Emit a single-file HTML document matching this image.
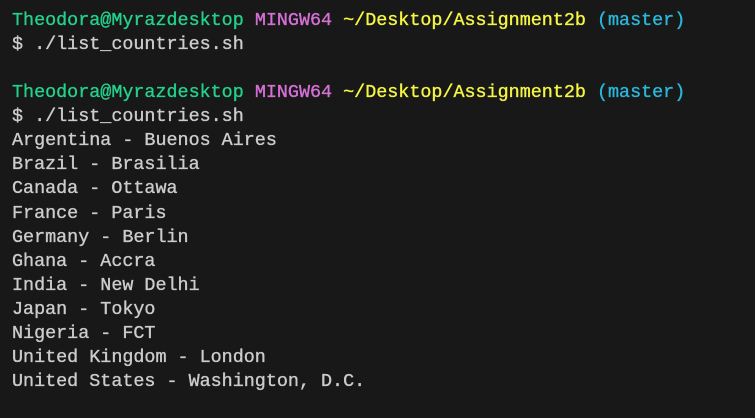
<!DOCTYPE html>
<html><head><style>
html,body{margin:0;padding:0;background:#181818;width:755px;height:418px;overflow:hidden}
pre{margin:0;position:absolute;left:12px;top:9px;font-family:"Liberation Mono",monospace;font-size:18.4px;line-height:24.07px;color:#cccccc;font-weight:normal;-webkit-text-stroke:0.35px currentColor}
.g{color:#23d18b}.m{color:#d670d6}.y{color:#f5f543}.c{color:#29b8db}
</style></head><body><pre><span class="g">Theodora@Myrazdesktop</span> <span class="m">MINGW64</span> <span class="y">~/Desktop/Assignment2b</span> <span class="c">(master)</span>
$ ./list_countries.sh

<span class="g">Theodora@Myrazdesktop</span> <span class="m">MINGW64</span> <span class="y">~/Desktop/Assignment2b</span> <span class="c">(master)</span>
$ ./list_countries.sh
Argentina - Buenos Aires
Brazil - Brasilia
Canada - Ottawa
France - Paris
Germany - Berlin
Ghana - Accra
India - New Delhi
Japan - Tokyo
Nigeria - FCT
United Kingdom - London
United States - Washington, D.C.</pre></body></html>
